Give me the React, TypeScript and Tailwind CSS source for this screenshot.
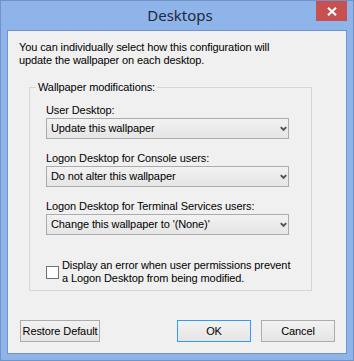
import React from 'react';

const font = { fontFamily: '"Liberation Sans", Arial, sans-serif' };

function Chevron() {
    return (
        <svg width="7" height="6" viewBox="0 0 7 6" className="text-[#505050]">
            <path d="M0.8 1.2 L3.5 4 L6.2 1.2" fill="none" stroke="currentColor" strokeWidth="1.9" />
        </svg>
    );
}

function Select({ value }: { value: string }) {
    return (
        <div className="flex items-center h-[21px] w-[243px] border border-[#acacac] bg-gradient-to-b from-[#f2f2f2] to-[#e5e5e5] pl-[4px] pr-[1px]">
            <span className="flex-1 truncate">{value}</span>
            <Chevron />
        </div>
    );
}

function Button({ label, primary, width }: { label: string; primary?: boolean; width: string }) {
    return (
        <button
            className={
                'h-[22px] border bg-gradient-to-b from-[#f2f2f2] to-[#e5e5e5] text-[11px] tracking-[-0.1px] text-black ' +
                width +
                (primary ? ' border-[#3399ff]' : ' border-[#acacac]')
            }
            style={font}
        >
            {label}
        </button>
    );
}

export default function App() {
    return (
        <div className="w-[354px] h-[361px] flex flex-col border border-[#7193c8] bg-[#8fb4ea]" style={font}>
            {/* Title bar */}
            <div className="relative h-[29px] flex items-center justify-center">
                <span
                    className="text-[15px] text-[#1e2a3a] pl-[6px] pb-[1px]"
                    style={{ fontFamily: '"Noto Sans", "Open Sans", sans-serif' }}
                >
                    Desktops
                </span>
                <div className="absolute top-0 right-[6px] w-[31px] h-[20px] bg-[#c75050] flex items-center justify-center">
                    <svg width="10" height="9" viewBox="0 0 10 9">
                        <path d="M1 0.8 L9 8.2 M9 0.8 L1 8.2" stroke="#fff" strokeWidth="2.2" />
                    </svg>
                </div>
            </div>

            {/* Client area */}
            <div className="flex-1 mx-[6px] mb-[6px] border border-[#6f93cb] bg-[#f0f0f0] text-[11px] leading-[13px] tracking-[-0.1px] text-black flex flex-col">
                <p className="mt-[10px] ml-[11px]">
                    You can individually select how this configuration will
                    <br />
                    update the wallpaper on each desktop.
                </p>

                {/* Group box */}
                <div className="relative mt-[20px] ml-[21px] w-[283px] h-[204px] border border-[#d5d5d5] pt-[16px] pl-[16px]">
                    <span className="absolute -top-[7px] left-[6px] px-[2px] bg-[#f0f0f0]">Wallpaper modifications:</span>
                    <div>User Desktop:</div>
                    <div className="mt-[1px]">
                        <Select value="Update this wallpaper" />
                    </div>
                    <div className="mt-[13px]">Logon Desktop for Console users:</div>
                    <div className="mt-[1px]">
                        <Select value="Do not alter this wallpaper" />
                    </div>
                    <div className="mt-[13px]">Logon Desktop for Terminal Services users:</div>
                    <div className="mt-[1px]">
                        <Select value="Change this wallpaper to '(None)'" />
                    </div>
                    <div className="mt-[24px] flex items-center gap-[3px]">
                        <div className="w-[13px] h-[13px] border border-[#707070] bg-white" />
                        <div>
                            Display an error when user permissions prevent
                            <br />
                            a Logon Desktop from being modified.
                        </div>
                    </div>
                </div>

                {/* Buttons */}
                <div className="mt-[29px] ml-[12px] mr-[11px] flex">
                    <Button label="Restore Default" width="w-[80px]" />
                    <div className="flex-1" />
                    <Button label="OK" primary width="w-[74px]" />
                    <div className="w-[10px]" />
                    <Button label="Cancel" width="w-[74px]" />
                </div>
            </div>
        </div>
    );
}
